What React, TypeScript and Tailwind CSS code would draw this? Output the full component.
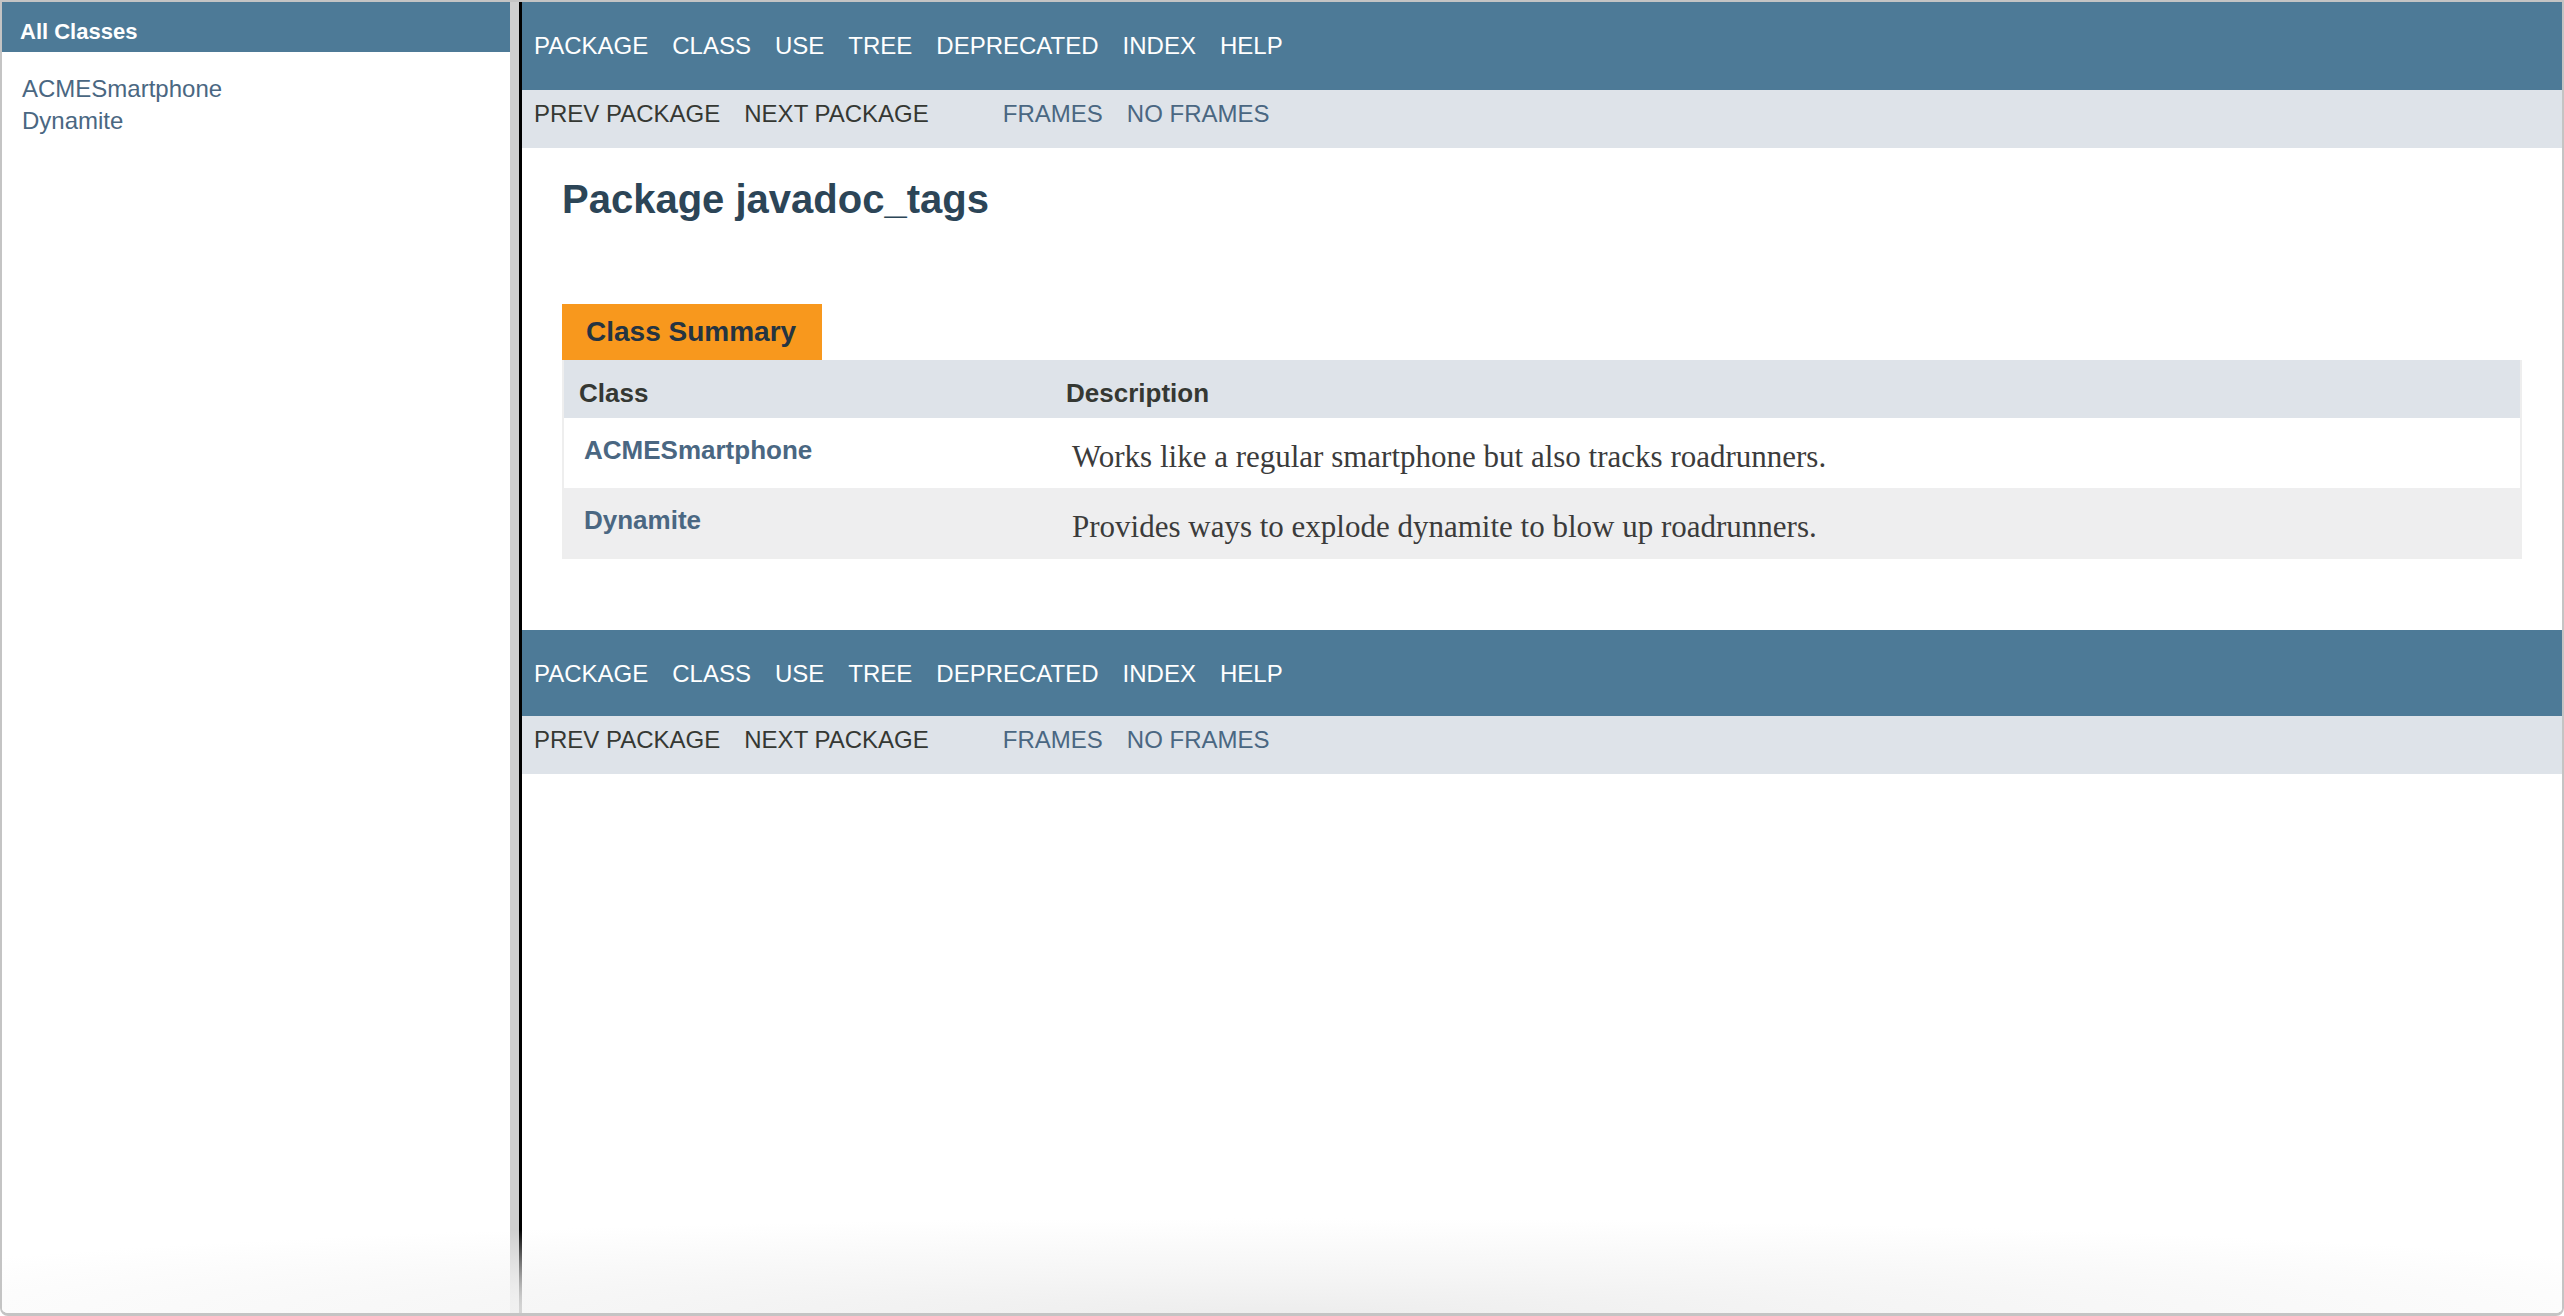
import React from "react";

const topItems = ["Package", "Class", "Use", "Tree", "Deprecated", "Index", "Help"];

function TopNav({ top }: { top?: boolean }) {
  return (
    <div
      className={
        top
          ? "h-[88px] shrink-0 bg-[#4D7A97] pt-[30px] flex text-[24px] leading-[28px] text-white uppercase"
          : "h-[86px] shrink-0 bg-[#4D7A97] pt-[30px] flex text-[24px] leading-[28px] text-white uppercase"
      }
    >
      {topItems.map((t) => (
        <span key={t} className="px-[12px]">
          {t}
        </span>
      ))}
    </div>
  );
}

function SubNav() {
  return (
    <div className="h-[58px] shrink-0 bg-[#dee3e9] pt-[10px] flex text-[24px] leading-[28px] uppercase">
      <div className="flex mr-[50px] text-[#353833]">
        <span className="px-[12px]">Prev Package</span>
        <span className="px-[12px]">Next Package</span>
      </div>
      <div className="flex text-[#4A6782]">
        <span className="px-[12px]">Frames</span>
        <span className="px-[12px]">No Frames</span>
      </div>
    </div>
  );
}

const rows = [
  {
    name: "ACMESmartphone",
    desc: "Works like a regular smartphone but also tracks roadrunners.",
    alt: false,
  },
  {
    name: "Dynamite",
    desc: "Provides ways to explode dynamite to blow up roadrunners.",
    alt: true,
  },
];

export default function App() {
  return (
    <div className="relative w-[2564px] h-[1316px] overflow-hidden bg-white border-t-2 border-l-2 border-r-2 border-b-[3px] border-[#c4c4c4] rounded-b-[8px] flex font-['Liberation_Sans',Arial,sans-serif] text-[#353833]">
      {/* Left frame */}
      <aside className="w-[508px] shrink-0 flex flex-col bg-white">
        <div className="h-[50px] shrink-0 bg-[#4D7A97] text-white font-bold text-[22px] leading-[26px] pl-[18px] pt-[17px]">
          All Classes
        </div>
        <ul className="pl-[20px] pt-[21px] text-[24px] leading-[32px] text-[#4A6782]">
          <li>ACMESmartphone</li>
          <li>Dynamite</li>
        </ul>
      </aside>

      {/* Splitter */}
      <div className="w-[9px] shrink-0 bg-[#cfcfcf]" />
      <div className="w-[3px] shrink-0 bg-black" />

      {/* Right frame */}
      <main className="flex-1 flex flex-col bg-white">
        <TopNav top />
        <SubNav />

        <div className="px-[40px]">
          <h1 className="mt-[28px] text-[40px] leading-[46px] font-bold text-[#2c4557]">
            Package javadoc_tags
          </h1>

          <div className="mt-[82px] w-[260px] h-[56px] bg-[#F8981D] pl-[24px] pt-[12px] text-[28px] leading-[32px] font-bold text-[#253441] whitespace-nowrap">
            Class Summary
          </div>

          <div className="border-l-2 border-r-2 border-b-2 border-[#eeeeee]">
            <div className="grid grid-cols-[488px_1fr] h-[58px] bg-[#dee3e9] text-[26px] leading-[30px] font-bold">
              <div className="pl-[15px] pt-[18px]">Class</div>
              <div className="pl-[14px] pt-[18px]">Description</div>
            </div>
            {rows.map((r) => (
              <div
                key={r.name}
                className={
                  r.alt
                    ? "grid grid-cols-[488px_1fr] h-[69px] bg-[#EEEEEF]"
                    : "grid grid-cols-[488px_1fr] h-[70px] bg-white"
                }
              >
                <div className="pl-[20px] pt-[17px] text-[26px] leading-[30px] font-bold text-[#4A6782] whitespace-nowrap">
                  {r.name}
                </div>
                <div className="pl-[20px] pt-[21px] text-[31px] leading-[36px] font-['Liberation_Serif','Times_New_Roman',serif] text-[#3b3b3b] whitespace-nowrap">
                  {r.desc}
                </div>
              </div>
            ))}
          </div>
        </div>

        <div className="mt-[71px] flex flex-col">
          <TopNav />
          <SubNav />
        </div>
      </main>

      {/* Window bottom shading */}
      <div className="pointer-events-none absolute inset-x-0 bottom-0 h-[95px] bg-[radial-gradient(ellipse_62%_100%_at_50%_100%,#ededed_0%,#f5f5f5_40%,rgba(255,255,255,0)_100%)]" />
    </div>
  );
}
